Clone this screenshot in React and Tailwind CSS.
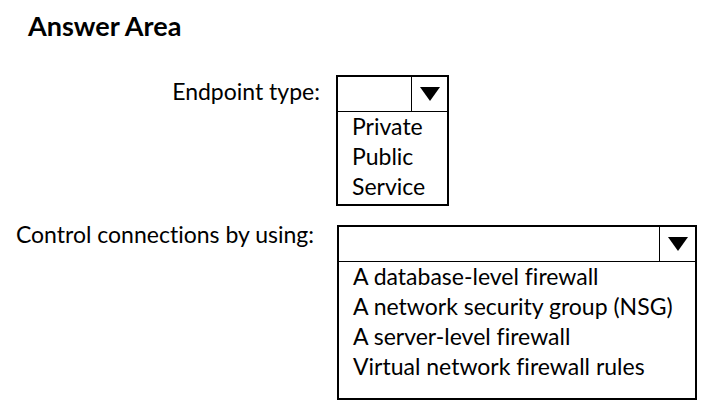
import React from 'react';

const Caret = () => (
    <svg width="20" height="14" viewBox="0 0 20 14">
        <polygon points="0,0 20,0 10,14" fill="#000" />
    </svg>
);

const Dropdown = ({ options, width, padBottom }) => (
    <div className={`${width} border-2 border-black bg-white`}>
        <div className="flex h-[35px] border-b border-black">
            <div className="flex-1 border-r border-black"></div>
            <div className="w-[35px] flex items-center justify-center">
                <Caret />
            </div>
        </div>
        <ul className={`pl-[14px] ${padBottom}`}>
            {options.map((opt) => (
                <li key={opt} className="h-[30px] leading-[28px] whitespace-nowrap">{opt}</li>
            ))}
        </ul>
    </div>
);

const App = () => {
    return (
        <div className="w-[711px] h-[417px] bg-white text-black overflow-hidden font-['Lato',sans-serif] text-[23px] [font-variant-ligatures:none]">
            {/* Heading */}
            <h1 className="pt-[11px] pl-[28px] text-[27px] leading-[30px] font-bold">Answer Area</h1>

            {/* Endpoint type */}
            <div className="flex items-start mt-[34px]">
                <div className="w-[320px] text-right leading-[28px] mt-[2px]">Endpoint type:</div>
                <div className="ml-[16px]">
                    <Dropdown options={['Private', 'Public', 'Service']} width="w-[113px]" padBottom="pb-[2px]" />
                </div>
            </div>

            {/* Control connections */}
            <div className="flex items-start mt-[14px]">
                <div className="w-[314px] text-right leading-[28px]">Control connections by using:</div>
                <div className="ml-[23px] mt-[5px]">
                    <Dropdown
                        options={[
                            'A database-level firewall',
                            'A network security group (NSG)',
                            'A server-level firewall',
                            'Virtual network firewall rules',
                        ]}
                        width="w-[360px]"
                        padBottom="pb-[16px]"
                    />
                </div>
            </div>
        </div>
    );
};

export default App;
